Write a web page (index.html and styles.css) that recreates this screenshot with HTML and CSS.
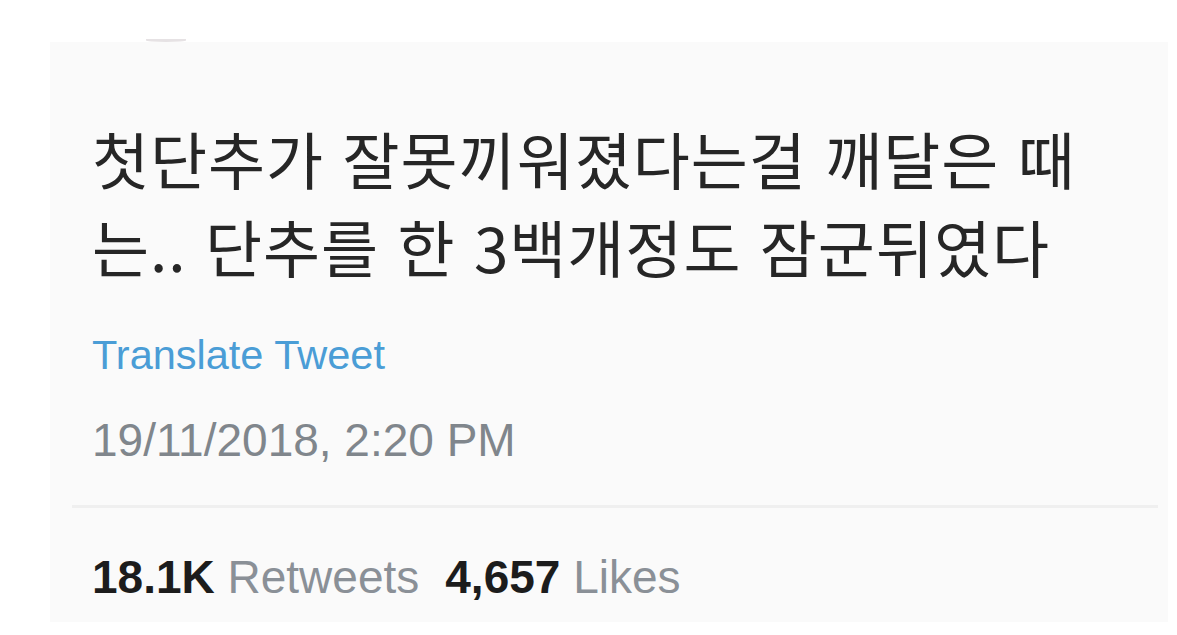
FILE: index.html
```html
<!DOCTYPE html>
<html lang="ko">
<head>
<meta charset="utf-8">
<title>Tweet</title>
<link rel="stylesheet" href="styles.css">
</head>
<body>
<main class="card">
  <div class="avatar-trace"></div>
  <p class="tweet-text">첫단추가 잘못끼워졌다는걸 깨달은 때<br>는.. 단추를 한 3백개정도 잠군뒤였다</p>
  <a class="translate">Translate Tweet</a>
  <div class="timestamp">19/11/2018, 2:20 PM</div>
  <div class="divider"></div>
  <div class="stats">
    <span class="stat"><b>18.1K</b> Retweets</span>
    <span class="stat"><b>4,657</b> Likes</span>
  </div>
</main>
</body>
</html>
```

FILE: styles.css
```css
html, body {
  margin: 0;
  padding: 0;
  background: #ffffff;
}

body {
  width: 1177px;
  height: 635px;
  overflow: hidden;
  font-family: "Liberation Sans", Arial, sans-serif;
}

.card {
  position: relative;
  margin: 42px 0 0 50px;
  width: 1118px;
  height: 580px;
  box-sizing: border-box;
  padding: 0 0 0 42px;
  background: #fafafa;
  display: flex;
  flex-direction: column;
  align-items: flex-start;
}

.avatar-trace {
  position: absolute;
  left: 96px;
  top: -3px;
  width: 40px;
  height: 3px;
  border-radius: 0 0 50% 50%;
  background: #e6e2e4;
}

.tweet-text {
  margin: 72px 0 0 0;
  font-family: "Noto Sans CJK KR", "Noto Sans", sans-serif;
  font-size: 62px;
  line-height: 88px;
  letter-spacing: 1px;
  color: #262626;
}

.translate {
  margin-top: 42px;
  font-size: 41.5px;
  line-height: 46px;
  color: #4a9dd6;
}

.timestamp {
  margin-top: 37px;
  font-size: 46px;
  line-height: 50px;
  color: #80868c;
}

.divider {
  margin: 40px 0 0 -20px;
  width: 1086px;
  height: 3px;
  background: #efefef;
}

.stats {
  margin-top: 44px;
  display: flex;
  gap: 26px;
  font-size: 46px;
  line-height: 50px;
  color: #8a9097;
}

.stat b {
  color: #1c1c1c;
  font-weight: 700;
}
```
